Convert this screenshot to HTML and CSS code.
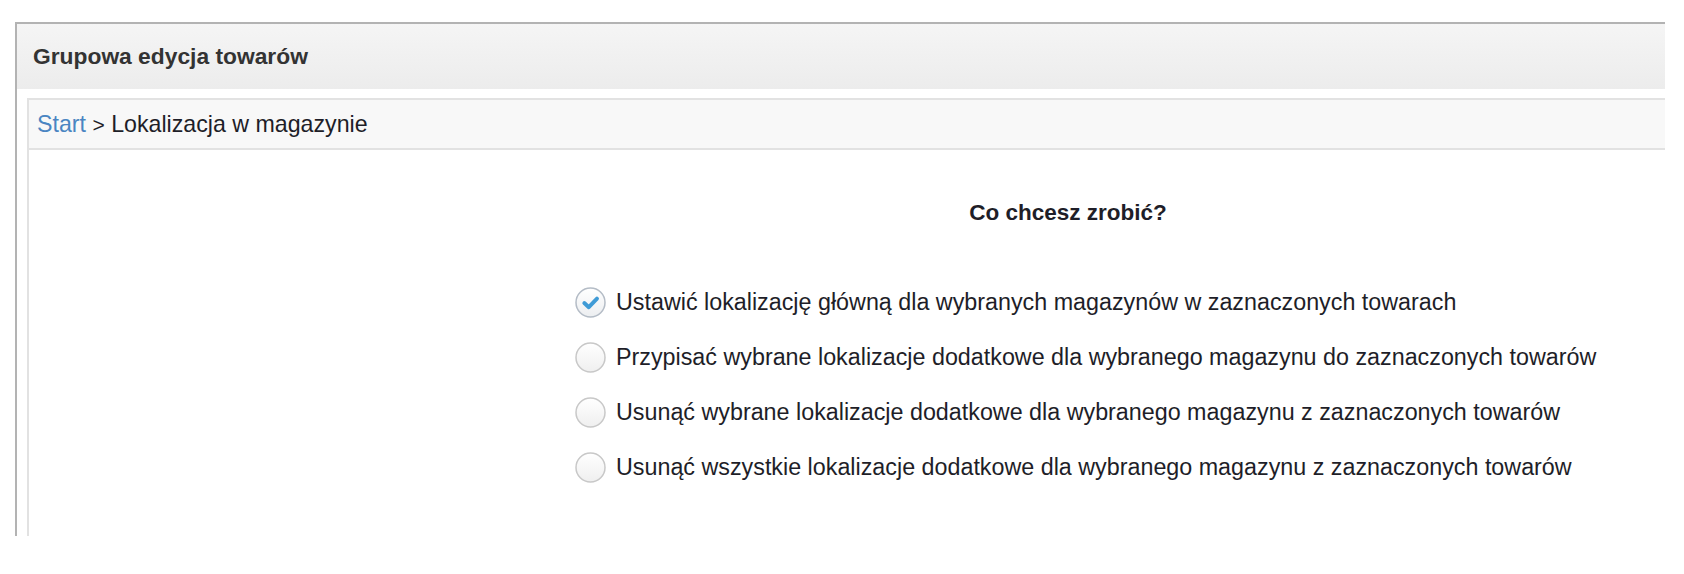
FILE: index.html
```html
<!DOCTYPE html>
<html lang="pl">
<head>
<meta charset="utf-8">
<title>Grupowa edycja towarów</title>
<link rel="stylesheet" href="styles.css">
</head>
<body>
<div class="panel">
  <div class="panel-header">Grupowa edycja towarów</div>
  <div class="inner">
    <div class="breadcrumb"><a class="crumb-link" href="#">Start</a> <span class="sep">&gt;</span> Lokalizacja w magazynie</div>
    <div class="content">
      <div class="choice">
        <div class="choice-title">Co chcesz zrobić?</div>
        <ul class="options">
          <li class="option">
            <svg class="radio" width="31" height="31" viewBox="0 0 31 31">
              <defs>
                <linearGradient id="rg1" x1="0" y1="0" x2="0" y2="1">
                  <stop offset="0" stop-color="#ffffff"/>
                  <stop offset="1" stop-color="#eceef0"/>
                </linearGradient>
              </defs>
              <circle cx="15.5" cy="15.5" r="14.5" fill="url(#rg1)" stroke="#b4bcc6" stroke-width="1.5"/>
              <path d="M9.3 16 L13.8 20.2 L22 11.6" fill="none" stroke="#3f9bd6" stroke-width="3.9" stroke-linecap="round" stroke-linejoin="round"/>
            </svg>
            <span class="option-text">Ustawić lokalizację główną dla wybranych magazynów w zaznaczonych towarach</span>
          </li>
          <li class="option">
            <svg class="radio" width="31" height="31" viewBox="0 0 31 31">
              <defs>
                <linearGradient id="rg2" x1="0" y1="0" x2="0" y2="1">
                  <stop offset="0" stop-color="#ffffff"/>
                  <stop offset="1" stop-color="#efefef"/>
                </linearGradient>
              </defs>
              <circle cx="15.5" cy="15.5" r="14.5" fill="url(#rg2)" stroke="#c8c8c8" stroke-width="1.5"/>
            </svg>
            <span class="option-text">Przypisać wybrane lokalizacje dodatkowe dla wybranego magazynu do zaznaczonych towarów</span>
          </li>
          <li class="option">
            <svg class="radio" width="31" height="31" viewBox="0 0 31 31">
              <circle cx="15.5" cy="15.5" r="14.5" fill="url(#rg2)" stroke="#c8c8c8" stroke-width="1.5"/>
            </svg>
            <span class="option-text">Usunąć wybrane lokalizacje dodatkowe dla wybranego magazynu z zaznaczonych towarów</span>
          </li>
          <li class="option">
            <svg class="radio" width="31" height="31" viewBox="0 0 31 31">
              <circle cx="15.5" cy="15.5" r="14.5" fill="url(#rg2)" stroke="#c8c8c8" stroke-width="1.5"/>
            </svg>
            <span class="option-text">Usunąć wszystkie lokalizacje dodatkowe dla wybranego magazynu z zaznaczonych towarów</span>
          </li>
        </ul>
      </div>
    </div>
  </div>
</div>
</body>
</html>
```

FILE: styles.css
```css
html, body {
  margin: 0;
  padding: 0;
  background: #ffffff;
}

body {
  font-family: "Liberation Sans", Arial, sans-serif;
  font-size: 22.5px;
  color: #1e1e28;
}

.panel {
  margin: 22px 0 0 15px;
  width: 1650px;
  height: 514px;
  box-sizing: border-box;
  border-top: 2px solid #b3b3b3;
  border-left: 2px solid #b3b3b3;
  overflow: hidden;
}

.panel-header {
  height: 65px;
  line-height: 65px;
  padding-left: 16px;
  background: linear-gradient(#f5f5f5, #ececec);
  font-weight: bold;
  font-size: 22.8px;
  color: #333333;
  white-space: nowrap;
}

.inner {
  margin: 9px 0 0 10px;
  border-top: 2px solid #e2e2e2;
  border-left: 2px solid #e2e2e2;
  height: 600px;
}

.breadcrumb {
  height: 48px;
  line-height: 48px;
  padding-left: 8px;
  background: #f8f8f8;
  border-bottom: 2px solid #e2e2e2;
  font-size: 23.2px;
  color: #1e1e28;
  white-space: nowrap;
}

.crumb-link {
  color: #4a85c2;
  text-decoration: none;
}

.sep {
  font-size: 21px;
}

.content {
  padding-top: 48px;
}

.choice {
  margin-left: 546px;
  width: 986px;
}

.choice-title {
  text-align: center;
  font-weight: bold;
  line-height: 30px;
  color: #1e1e28;
}

.options {
  list-style: none;
  margin: 47px 0 0 0;
  padding: 0;
}

.option {
  display: flex;
  align-items: center;
  height: 55px;
  white-space: nowrap;
  font-size: 23.3px;
}

.radio {
  flex: none;
  margin-right: 10px;
}

.option-text {
  color: #1e1e28;
}
```
